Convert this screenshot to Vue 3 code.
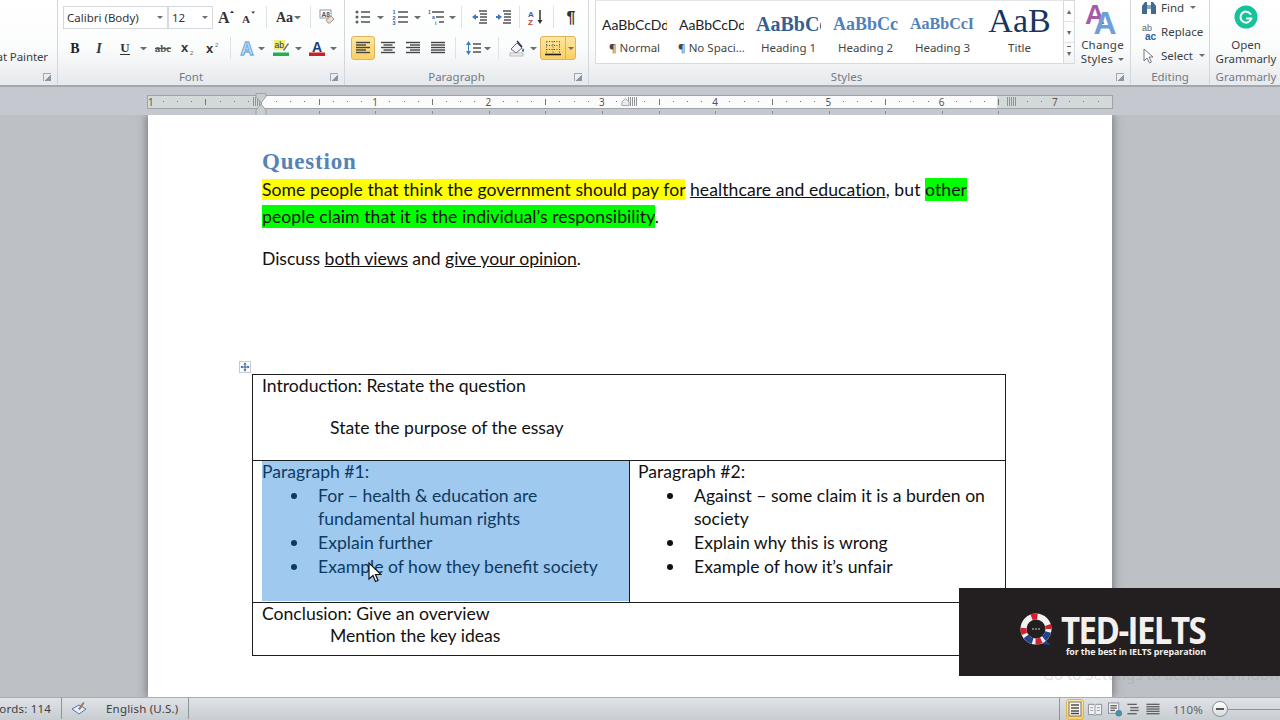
<script setup>
// icon bodies, all drawn in a 16x16 box
const serif = 'font-family="Liberation Serif"'
const sans = 'font-family="Liberation Sans"'
const lines = (rows) => rows.map(([a, b, y]) => `<path d="M${a} ${y}H${b}" stroke="#444" stroke-width="1.4"/>`).join('')
const dots = [3, 8, 13].map((y) => `<circle cx="3" cy="${y}" r="1.5" fill="#55606c"/>`).join('')

const icons = {
  grow: `<text x="0" y="14" ${serif} font-weight="700" font-size="16" fill="#333">A</text><path d="M12 4l2-2.500 2 2.500z" fill="#333"/>`,
  shrink: `<text x="1" y="14" ${serif} font-weight="700" font-size="12" fill="#333">A</text><path d="M11 2l2 2.500 2-2.500z" fill="#333"/>`,
  case: `<text x="0" y="13" ${serif} font-weight="700" font-size="14" fill="#333">Aa</text>`,
  clear: `<rect x="1" y="1" width="11" height="8" fill="#fff" stroke="#8b98a8"/><text x="2.500" y="7.500" ${sans} font-size="6.500" font-weight="700" fill="#456">A8</text><path d="M7 11l5-4 3 3-4 4H9z" fill="#f3d9d6" stroke="#a98"/>`,
  bold: `<text x="8" y="13" text-anchor="middle" ${serif} font-weight="700" font-size="14" fill="#222">B</text>`,
  italic: `<text x="8" y="13" text-anchor="middle" ${serif} font-style="italic" font-weight="700" font-size="14" fill="#333">I</text>`,
  under: `<text x="8" y="11.500" text-anchor="middle" ${serif} font-weight="700" font-size="13" fill="#333">U</text><path d="M3 14.500h10" stroke="#333"/>`,
  strike: `<text x="8" y="12" text-anchor="middle" ${serif} font-weight="700" font-size="11" fill="#555">abc</text><path d="M0 8.500h16" stroke="#555"/>`,
  sub: `<text x="1" y="12" ${sans} font-weight="700" font-size="13" fill="#333">x</text><text x="10" y="15" ${sans} font-size="6" fill="#666">2</text>`,
  sup: `<text x="1" y="13" ${sans} font-weight="700" font-size="13" fill="#333">x</text><text x="10" y="7" ${sans} font-size="6" fill="#666">2</text>`,
  glow: `<text x="8" y="15" text-anchor="middle" ${sans} font-weight="700" font-size="18" fill="#dcebf9" stroke="#79aee2" stroke-width="1.300">A</text>`,
  mark: `<rect x="1" y="0" width="11" height="10" fill="#f0ee7a"/><text x="1.500" y="8" ${sans} font-size="8.500" fill="#333">ab</text><path d="M10 10l5-7 1 1-5 7z" fill="#55708f"/><rect x="0" y="12.500" width="16" height="3.500" fill="#22b14c"/>`,
  color: `<text x="8" y="11.500" text-anchor="middle" ${sans} font-weight="700" font-size="14" fill="#1f3f78">A</text><rect x="0" y="12.500" width="16" height="3.500" fill="#cc2027"/>`,
  bullets: dots + lines([[7, 16, 3], [7, 16, 8], [7, 16, 13]]),
  numbers: `<g ${sans} font-size="5.500" font-weight="700" fill="#33609e"><text x="0.500" y="5">1</text><text x="0.500" y="10.500">2</text><text x="0.500" y="16">3</text></g>` + lines([[6, 16, 3], [6, 16, 8], [6, 16, 13]]),
  multi: `<g ${sans} font-size="5" font-weight="700" fill="#33609e"><text x="0" y="5">1</text><text x="4" y="10">a</text><text x="7" y="16">i</text></g>` + lines([[4, 16, 3], [8, 16, 8], [11, 16, 13]]),
  outdent: `<path d="M1 8l4-3v2h2v2H5v2z" fill="#3d78c0"/>` + lines([[8, 16, 2], [9, 16, 5], [9, 16, 8], [9, 16, 11], [8, 16, 14]]),
  indent: `<path d="M7 8L3 5v2H1v2h2v2z" fill="#3d78c0"/>` + lines([[8, 16, 2], [9, 16, 5], [9, 16, 8], [9, 16, 11], [8, 16, 14]]),
  sort: `<text x="0" y="7.500" ${sans} font-weight="700" font-size="8" fill="#33609e">A</text><text x="0" y="16" ${sans} font-weight="700" font-size="8" fill="#b0493f">Z</text><path d="M12 1v11" stroke="#333" stroke-width="1.500"/><path d="M9.500 11h5L12 15z" fill="#333"/>`,
  pilcrow: `<text x="8" y="14" text-anchor="middle" ${sans} font-weight="700" font-size="16" fill="#333">¶</text>`,
  left: lines([[1, 15, 2.500], [1, 11, 5], [1, 15, 7.500], [1, 11, 10], [1, 15, 12.500]]),
  center: lines([[1, 15, 2.500], [3.500, 12.500, 5], [1, 15, 7.500], [3.500, 12.500, 10], [1, 15, 12.500]]),
  right: lines([[1, 15, 2.500], [5, 15, 5], [1, 15, 7.500], [5, 15, 10], [1, 15, 12.500]]),
  justify: lines([[1, 15, 2.500], [1, 15, 5], [1, 15, 7.500], [1, 15, 10], [1, 15, 12.500]]),
  spacing: `<path d="M3.500 1L6 5H1zM3.500 15L1 11h5z" fill="#3d78c0"/><path d="M3.500 4v8" stroke="#3d78c0"/>` + lines([[8, 16, 4], [8, 16, 8], [8, 16, 12]]),
  shade: `<path d="M2 9l6-6 5 5-6 5z" fill="#f4f6f8" stroke="#667"/><path d="M8 1l5 6" stroke="#334" stroke-width="1.500"/><path d="M14 8c1.500 2 1.500 3.500 0 4-1.500-.5-1.500-2 0-4z" fill="#3d78c0"/><rect x="1" y="13" width="13" height="3" fill="#eee" stroke="#999" stroke-width=".6"/>`,
  borders: `<path d="M1.500 1.500h13M1.500 5.500h13M1.500 9.500h13M1.500 1.500v12M8 1.500v12M14.500 1.500v12" stroke="#555" stroke-dasharray="1 1.500"/><path d="M0 14.500h16" stroke="#222" stroke-width="1.600"/>`,
  print: `<rect x="2" y="1" width="12" height="14" fill="#f8f6ee" stroke="#777"/>` + lines([[4, 12, 4], [4, 12, 7], [4, 12, 10], [4, 12, 12.500]]),
  read: `<path d="M1 2.500h6l1 1 1-1h6v11H9l-1 1-1-1H1z" fill="#f6f7f8" stroke="#778"/><path d="M8 3.500v10M3 6h3M3 9h3M10 6h3M10 9h3" stroke="#889"/>`,
  web: `<rect x="1" y="1" width="11" height="11" fill="#f6f7f8" stroke="#778"/>` + lines([[3, 10, 4], [3, 10, 6.500], [3, 8, 9]]) + `<circle cx="12" cy="12" r="3.500" fill="#2f7d9c"/>`,
  outline: lines([[2, 12, 2.500], [5, 14, 6], [5, 14, 9], [2, 12, 12.500]]),
  draft: lines([[1, 15, 2.500], [1, 15, 5], [1, 15, 7.500], [1, 15, 10], [1, 15, 12.500]]),
  proof: `<path d="M1 9l7-4 7 4-7 5z" fill="#e8eef6" stroke="#4b78b8"/><path d="M7 9l5-7 1.500 1L9 10z" fill="#9a7a50"/>`,
}

// lay a toolbar row out left to right: each tool names the x of its centre,
// and its left margin is whatever is left over after the previous tool
const place = (start, items) => {
  let right = start
  return items.map((t) => {
    const w = t.w || 16
    const gap = t.c - w / 2 - right
    right = t.c + w / 2
    return { ...t, w, gap }
  })
}
const D = (c) => ({ c, w: 7, drop: true })
const S = (c) => ({ c, w: 1, sep: true })

const fontTop = place(213, [
  { c: 226, i: 'grow' }, { c: 248, i: 'shrink', w: 15 }, S(266), { c: 284, i: 'case' }, D(297), S(310), { c: 327, i: 'clear' },
])
const fontBottom = place(63, [
  { c: 75, i: 'bold' }, { c: 99, i: 'italic' }, { c: 125, i: 'under' }, D(143), { c: 163, i: 'strike', w: 18 }, { c: 188, i: 'sub' }, { c: 213, i: 'sup' },
  S(230), { c: 247, i: 'glow' }, D(261), { c: 281, i: 'mark' }, D(298), { c: 317, i: 'color' }, D(333),
])
const paraTop = place(345, [
  { c: 362, i: 'bullets' }, D(380), { c: 400, i: 'numbers' }, D(417), { c: 436, i: 'multi' }, D(452), S(461),
  { c: 479, i: 'outdent' }, { c: 503, i: 'indent' }, S(519), { c: 536, i: 'sort' }, S(553), { c: 571, i: 'pilcrow' },
])
const paraBottom = place(345, [
  { c: 362.5, i: 'left', w: 24, active: true }, { c: 388, i: 'center' }, { c: 413, i: 'right' }, { c: 438, i: 'justify' }, S(455),
  { c: 473, i: 'spacing' }, D(487), S(498), { c: 517, i: 'shade' }, D(533),
])
const statusRight = place(1060, [
  { c: 1074.5, i: 'print', w: 18, active: true }, { c: 1095, i: 'read' }, { c: 1115, i: 'web' }, { c: 1133, i: 'outline' }, { c: 1153, i: 'draft' },
])

const gallery = [
  { cls: 'p-normal', preview: 'AaBbCcDd', label: '¶ Normal' },
  { cls: 'p-normal', preview: 'AaBbCcDd', label: '¶ No Spaci...' },
  { cls: 'p-h1', preview: 'AaBbCc', label: 'Heading 1' },
  { cls: 'p-h2', preview: 'AaBbCc', label: 'Heading 2' },
  { cls: 'p-h3', preview: 'AaBbCcI', label: 'Heading 3' },
  { cls: 'p-title', preview: 'AaB', label: 'Title' },
]

// ruler: origin is the left page margin, one inch is 113.3px
const inch = 113.3
const origin = 114
const ticks = []
for (let n = -9; n <= 60; n++) {
  const x = origin + (n * inch) / 8
  if (x < 6 || x > 960 || n % 8 === 0) continue
  ticks.push({ x, major: n % 4 === 0 })
}
const numbers = [1, 2, 3, 4, 5, 6, 7].map((n) => ({ n, x: origin + n * inch }))
const lowerTicks = []
for (let n = 1; n <= 13; n++) lowerTicks.push(origin + (n * inch) / 2)
const hatches = [105, 480, 859]
</script>

<template>
  <div class="word">
    <header class="ribbon">
      <section class="group clip">
        <div class="painter">at Painter</div>
        <footer class="group-foot"><i class="launcher"></i></footer>
      </section>

      <section class="group font">
        <div class="rows">
          <div class="row">
            <div class="select sel-font">Calibri (Body)<b class="caret"></b></div>
            <div class="select sel-size">12<b class="caret"></b></div>
            <template v-for="t in fontTop" :key="t.c">
              <i v-if="t.sep" class="sep" :style="{ marginLeft: t.gap + 'px' }"></i>
              <b v-else-if="t.drop" class="caret tool-caret" :style="{ marginLeft: t.gap + 'px', width: t.w + 'px' }"></b>
              <svg v-else class="ico" viewBox="0 0 16 16" :style="{ marginLeft: t.gap + 'px', width: t.w + 'px' }" v-html="icons[t.i]"></svg>
            </template>
          </div>
          <div class="row">
            <template v-for="t in fontBottom" :key="t.c">
              <i v-if="t.sep" class="sep" :style="{ marginLeft: t.gap + 'px' }"></i>
              <b v-else-if="t.drop" class="caret tool-caret" :style="{ marginLeft: t.gap + 'px', width: t.w + 'px' }"></b>
              <svg v-else class="ico" viewBox="0 0 16 16" :style="{ marginLeft: t.gap + 'px', width: t.w + 'px' }" v-html="icons[t.i]"></svg>
            </template>
          </div>
        </div>
        <footer class="group-foot off-launcher">Font<i class="launcher"></i></footer>
      </section>

      <section class="group para">
        <div class="rows">
          <div class="row">
            <template v-for="t in paraTop" :key="t.c">
              <i v-if="t.sep" class="sep" :style="{ marginLeft: t.gap + 'px' }"></i>
              <b v-else-if="t.drop" class="caret tool-caret" :style="{ marginLeft: t.gap + 'px', width: t.w + 'px' }"></b>
              <svg v-else class="ico" viewBox="0 0 16 16" :style="{ marginLeft: t.gap + 'px', width: t.w + 'px' }" v-html="icons[t.i]"></svg>
            </template>
          </div>
          <div class="row">
            <template v-for="t in paraBottom" :key="t.c">
              <i v-if="t.sep" class="sep" :style="{ marginLeft: t.gap + 'px' }"></i>
              <b v-else-if="t.drop" class="caret tool-caret" :style="{ marginLeft: t.gap + 'px', width: t.w + 'px' }"></b>
              <span v-else-if="t.active" class="active" :style="{ marginLeft: t.gap + 'px', width: t.w + 'px' }">
                <svg class="ico" viewBox="0 0 16 16" v-html="icons[t.i]"></svg>
              </span>
              <svg v-else class="ico" viewBox="0 0 16 16" :style="{ marginLeft: t.gap + 'px', width: t.w + 'px' }" v-html="icons[t.i]"></svg>
            </template>
            <span class="active split">
              <span class="split-main"><svg class="ico" viewBox="0 0 16 16" v-html="icons.borders"></svg></span>
              <b class="caret"></b>
            </span>
          </div>
        </div>
        <footer class="group-foot off-launcher">Paragraph<i class="launcher"></i></footer>
      </section>

      <section class="group styles">
        <div class="styles-top">
          <div class="gallery">
            <div v-for="(g, n) in gallery" :key="n" class="style-item">
              <div class="preview" :class="g.cls">{{ g.preview }}</div>
              <div class="style-label">{{ g.label }}</div>
            </div>
          </div>
          <div class="scroller">
            <span>▴</span><span>▾</span><span class="more">▾</span>
          </div>
          <div class="change">
            <svg class="change-ico" viewBox="0 0 32 32">
              <text x="-1" y="22" font-family="Liberation Sans" font-weight="700" font-size="26" fill="#a55aa8">A</text>
              <text x="7" y="31" font-family="Liberation Sans" font-weight="700" font-size="30" fill="#6f9fd8">A</text>
            </svg>
            <div class="change-text">Change<br />Styles <b class="caret inline-caret"></b></div>
          </div>
        </div>
        <footer class="group-foot off-wide">Styles<i class="launcher"></i></footer>
      </section>

      <section class="group editing">
        <div class="edit-list">
          <div class="edit-row">
            <svg class="edit-ico" viewBox="0 0 16 16">
              <path d="M1 14V6l3-4h2v12zM15 14V6l-3-4h-2v12z" fill="#45688f" />
              <rect x="6" y="5" width="4" height="4" fill="#8aa7c6" />
            </svg>
            Find <b class="caret inline-caret"></b>
          </div>
          <div class="edit-row">
            <svg class="edit-ico" viewBox="0 0 16 16">
              <text x="1" y="7" font-family="Liberation Sans" font-size="9" fill="#666">ab</text>
              <text x="4" y="15.500" font-family="Liberation Sans" font-weight="700" font-size="10" fill="#2d5f9e">ac</text>
            </svg>
            Replace
          </div>
          <div class="edit-row">
            <svg class="edit-ico" viewBox="0 0 16 16">
              <path d="M3 1v12l3-3 2.500 5 2-1L8 9h4z" fill="#fff" stroke="#778" />
            </svg>
            Select <b class="caret inline-caret"></b>
          </div>
        </div>
        <footer class="group-foot">Editing</footer>
      </section>

      <section class="group grammarly">
        <svg class="g-logo" viewBox="0 0 24 24">
          <circle cx="12" cy="12" r="11.500" fill="#15c39a" />
          <path d="M16.500 9a5.500 5.500 0 1 0 .8 4.500H13" fill="none" stroke="#fff" stroke-width="2" stroke-linecap="round" />
        </svg>
        <div class="g-text">Open<br />Grammarly</div>
        <footer class="group-foot">Grammarly</footer>
      </section>
    </header>

    <div class="ruler-band">
      <div class="ruler">
        <span class="ruler-num" :style="{ left: '0px' }">1</span>
        <div class="ruler-white"></div>
        <i v-for="t in ticks" :key="t.x" class="tick" :class="{ major: t.major }" :style="{ left: t.x + 'px' }"></i>
        <span v-for="m in numbers" :key="m.n" class="ruler-num" :style="{ left: m.x - 3 + 'px' }">{{ m.n }}</span>
        <i v-for="x in lowerTicks" :key="x" class="low-tick" :style="{ left: x + 'px' }"></i>
        <i v-for="x in hatches" :key="x" class="hatch" :style="{ left: x + 'px' }"></i>
        <svg class="indent-mark" viewBox="0 0 12 24">
          <path d="M1 .5h10v3L6 10 1 3.500zM6 11l5 6v6.500H1V17z" fill="#c9cdd0" stroke="#9da3a8" />
        </svg>
        <svg class="hang-mark" viewBox="0 0 10 10">
          <path d="M5 1l4 4v4H1V5z" fill="#e8eaec" stroke="#9da3a8" />
        </svg>
      </div>
    </div>

    <main class="workspace">
      <article class="page">
        <h1 class="doc-title">Question</h1>
        <p class="doc-line lead">
          <span class="hl-y">Some people that think the government should pay for</span> <u>healthcare and education</u>, but <span class="hl-g">other people claim that it is the individual’s responsibility</span>.
        </p>
        <p class="doc-line discuss">Discuss <u>both views</u> and <u>give your opinion</u>.</p>

        <div class="outline-table">
          <svg class="move-handle" viewBox="0 0 12 12">
            <rect x=".5" y=".5" width="11" height="11" fill="#fff" stroke="#c4ccd4" />
            <path d="M6 2v8M2 6h8" stroke="#2f5f9e" />
            <path d="M6 1.500l1.500 2h-3zM6 10.500l1.500-2h-3zM1.500 6l2-1.500v3zM10.500 6l-2-1.500v3z" fill="#2f5f9e" />
          </svg>
          <div class="cell wide intro">
            <div class="first">Introduction: Restate the question</div>
            <div class="sub-line state">State the purpose of the essay</div>
          </div>
          <div class="cell pair left-cell">
            <div class="selected">
              <div class="first">Paragraph #1:</div>
              <ul>
                <li>For – health &amp; education are fundamental human rights</li>
                <li>Explain further</li>
                <li>Example of how they benefit society</li>
              </ul>
            </div>
          </div>
          <div class="cell pair right-cell">
            <div class="first">Paragraph #2:</div>
            <ul>
              <li>Against – some claim it is a burden on society</li>
              <li>Explain why this is wrong</li>
              <li>Example of how it’s unfair</li>
            </ul>
          </div>
          <div class="cell wide outro">
            <div class="first">Conclusion: Give an overview</div>
            <div class="sub-line">Mention the key ideas</div>
          </div>
        </div>
      </article>
      <span class="activate">Go to Settings to activate Windows.</span>
    </main>

    <footer class="status">
      <span class="st-words">Words: 114</span>
      <i class="st-sep"></i>
      <svg class="ico st-proof" viewBox="0 0 16 16" v-html="icons.proof"></svg>
      <span class="st-lang">English (U.S.)</span>
      <i class="st-sep"></i>
      <div class="st-right">
        <i class="st-sep"></i>
        <template v-for="t in statusRight" :key="t.c">
          <span v-if="t.active" class="active st-active" :style="{ marginLeft: t.gap + 'px', width: t.w + 'px' }">
            <svg class="ico" viewBox="0 0 16 16" v-html="icons[t.i]"></svg>
          </span>
          <svg v-else class="ico st-ico" viewBox="0 0 16 16" :style="{ marginLeft: t.gap + 'px', width: t.w + 'px' }" v-html="icons[t.i]"></svg>
        </template>
        <span class="st-zoom">110%</span>
        <span class="zoom-minus"></span>
        <span class="zoom-track"></span>
      </div>
    </footer>

    <aside class="brand">
      <svg class="brand-mark" viewBox="0 0 34 34">
        <path d="M26 27l6 5-10-1z" fill="#27408b" />
        <circle cx="17" cy="16" r="12.500" fill="none" stroke="#f2f2f2" stroke-width="6" />
        <circle cx="17" cy="16" r="12.500" fill="none" stroke="#27408b" stroke-width="6" stroke-dasharray="8 70" stroke-dashoffset="-3" />
        <circle cx="17" cy="16" r="12.500" fill="none" stroke="#27408b" stroke-width="6" stroke-dasharray="8 70" stroke-dashoffset="-23" />
        <circle cx="17" cy="16" r="12.500" fill="none" stroke="#d3202e" stroke-width="6" stroke-dasharray="6 14" stroke-dashoffset="-14" />
        <path d="M13.500 16h1M16.500 16h1M19.500 16h1" stroke="#fff" stroke-width="1.400" />
      </svg>
      <div class="brand-text">
        <div class="brand-name">TED-IELTS</div>
        <div class="brand-sub">for the best in IELTS preparation</div>
      </div>
    </aside>

    <svg class="cursor" viewBox="0 0 14 22">
      <path d="M1 1v16l4-3.500 2.500 6 2.500-1-2.500-6H13z" fill="#fff" stroke="#111" stroke-width="1.200" />
    </svg>
  </div>
</template>

<style>
html,
body {
  margin: 0;
  overflow: hidden;
}
</style>

<style scoped>
.word {
  position: relative;
  width: 1280px;
  height: 720px;
  overflow: hidden;
  display: flex;
  flex-direction: column;
  background: #bdc1c6;
  font-family: "Noto Sans", "Liberation Sans", sans-serif;
  color: #3c4043;
}

/* ribbon */
.ribbon {
  height: 85px;
  flex: none;
  display: flex;
  background: linear-gradient(#fff 0%, #fbfcfc 55%, #e6e9ed 100%);
  border-bottom: 2px solid #a4a9ae;
}
.group {
  position: relative;
  flex: none;
  box-sizing: border-box;
  border-right: 1px solid #d3d7db;
}
.clip { width: 58px; }
.font { width: 287px; }
.para { width: 244px; }
.styles { width: 542px; }
.editing { width: 79px; }
.grammarly { flex: 1; border-right: 0; display: flex; flex-direction: column; align-items: center; padding-left: 2px; }
.group-foot {
  position: absolute;
  left: 0;
  right: 0;
  bottom: -1px;
  height: 18px;
  line-height: 17px;
  text-align: center;
  font-size: 11.500px;
  color: #727a84;
}
.off-launcher { padding-right: 20px; }
.off-wide { padding-right: 26px; }
.grammarly .group-foot { padding-left: 2px; }
.launcher {
  position: absolute;
  right: 6px;
  bottom: 5px;
  width: 7px;
  height: 7px;
  border-top: 1px solid #a0a7ae;
  border-left: 1px solid #a0a7ae;
  background: linear-gradient(135deg, transparent 55%, #8b96a3 55%);
}
.painter {
  display: flex;
  justify-content: flex-end;
  padding: 49px 9px 0 0;
  font-size: 11.500px;
  line-height: 15px;
  white-space: nowrap;
  letter-spacing: -0.1px;
}
.rows { display: flex; flex-direction: column; }
.row {
  display: flex;
  align-items: center;
  height: 24px;
}
.rows .row:first-child { margin-top: 5px; }
.rows .row:last-child { margin-top: 7px; }
.font .rows { padding-left: 5px; }
.ico {
  flex: none;
  width: 16px;
  height: 16px;
  overflow: visible;
}
.sep {
  flex: none;
  width: 1px;
  height: 22px;
  background: #dfe2e5;
}
.caret {
  display: inline-block;
  flex: none;
  width: 0;
  height: 0;
  border: 3px solid transparent;
  border-top: 3px solid #6a6f75;
  border-bottom: 0;
}
.tool-caret {
  box-sizing: border-box;
  border-left-width: 3.5px;
  border-right-width: 3.5px;
}
.inline-caret { vertical-align: middle; margin-left: 2px; }
.select {
  box-sizing: border-box;
  flex: none;
  height: 23px;
  display: flex;
  align-items: center;
  justify-content: space-between;
  padding: 0 4px 0 3px;
  background: #fff;
  border: 1px solid #d6dade;
  font-size: 11.500px;
  color: #333;
}
.sel-font { width: 105px; }
.sel-size { width: 45px; padding-right: 4px; }
.active {
  box-sizing: border-box;
  flex: none;
  height: 24px;
  display: inline-flex;
  align-items: center;
  justify-content: center;
  background: linear-gradient(#fde79f, #fbcf63);
  border: 1px solid #dfb35a;
  border-radius: 3px;
}
.split {
  width: 36px;
  margin-left: 3px;
  justify-content: flex-start;
}
.split-main {
  display: flex;
  justify-content: center;
  width: 24px;
  border-right: 1px solid #dfb35a;
  height: 22px;
  align-items: center;
  margin-right: 2px;
}

/* styles gallery */
.styles-top {
  display: flex;
  padding-left: 6px;
}
.gallery {
  box-sizing: border-box;
  width: 469px;
  height: 64px;
  display: flex;
  background: #fff;
  border: 1px solid #d8dbde;
  border-top-color: #e4e6e8;
}
.style-item {
  flex: none;
  width: 77px;
  text-align: center;
  overflow: hidden;
}
.preview {
  height: 36px;
  line-height: 46px;
  white-space: nowrap;
  overflow: hidden;
  text-align: left;
  margin: 0 6px 0 6px;
}
.p-normal { font-family: "Lato", sans-serif; font-size: 14px; color: #222; line-height: 48px; }
.p-h1 { font-family: "Liberation Serif", serif; font-weight: 700; font-size: 20px; color: #365f91; }
.p-h2 { font-family: "Liberation Serif", serif; font-weight: 700; font-size: 18px; color: #4f81bd; }
.p-h3 { font-family: "Liberation Serif", serif; font-weight: 700; font-size: 16px; color: #4f81bd; }
.p-title { font-family: "Liberation Serif", serif; font-size: 34px; color: #17365d; line-height: 40px; text-align: center; margin: 0; }
.style-label {
  margin-top: 3px;
  font-size: 11.500px;
  line-height: 16px;
  white-space: nowrap;
  color: #444;
}
.scroller {
  box-sizing: border-box;
  flex: none;
  width: 11px;
  height: 64px;
  display: flex;
  flex-direction: column;
  border: 1px solid #d8dbde;
  border-left: 0;
  font-size: 8px;
  text-align: center;
  color: #666;
}
.scroller span { flex: 1; line-height: 20px; border-bottom: 1px solid #e0e2e5; }
.scroller .more { border-bottom: 0; text-decoration: overline; }
.change {
  flex: 1;
  text-align: center;
  font-size: 11.500px;
  line-height: 14px;
}
.change-ico {
  display: block;
  width: 36px;
  height: 34px;
  margin: 1px auto 3px;
  overflow: visible;
}
.change-text { letter-spacing: 0.2px; }

/* editing */
.edit-list {
  display: flex;
  flex-direction: column;
  gap: 7px;
  padding: 0 0 0 10px;
  margin-top: -1px;
}
.edit-row {
  display: flex;
  align-items: center;
  gap: 4px;
  height: 17px;
  font-size: 11.500px;
  white-space: nowrap;
}
.edit-ico { flex: none; width: 16px; height: 16px; }
.g-logo { width: 24px; height: 24px; margin-top: 5px; }
.g-text {
  margin-top: 9px;
  text-align: center;
  font-size: 11.500px;
  line-height: 14px;
}

/* ruler */
.ruler-band {
  flex: none;
  height: 28px;
  box-sizing: border-box;
  padding: 8px 0 0 147px;
  background: #c5c9cf;
}
.ruler {
  position: relative;
  box-sizing: border-box;
  width: 966px;
  height: 14px;
  background: #d3d9d9;
  border: 1px solid #9ea4a8;
  font-size: 10px;
  line-height: 12px;
  color: #555;
}
.ruler-white {
  position: absolute;
  top: 0;
  bottom: 0;
  left: 113px;
  width: 736px;
  background: #fbfbfb;
}
.tick {
  position: absolute;
  top: 5px;
  width: 1px;
  height: 1px;
  background: #777;
}
.tick.major { top: 3px; height: 6px; }
.low-tick {
  position: absolute;
  top: 15px;
  width: 1px;
  height: 3px;
  background: #8a8f94;
}
.ruler-num { position: absolute; top: 0; }
.hatch {
  position: absolute;
  top: 1px;
  width: 9px;
  height: 9px;
  background: repeating-linear-gradient(90deg, #8e9498 0 1px, transparent 1px 2px);
}
.indent-mark {
  position: absolute;
  left: 107px;
  top: -3px;
  width: 12px;
  height: 24px;
}
.hang-mark {
  position: absolute;
  left: 473px;
  top: 1px;
  width: 9px;
  height: 10px;
}

/* document */
.workspace {
  position: relative;
  flex: 1;
  min-height: 0;
  overflow: hidden;
  padding-left: 148px;
  background: #bdc1c6;
}
.page {
  box-sizing: border-box;
  width: 964px;
  height: 582px;
  padding: 33px 0 0 114px;
  background: #fff;
  box-shadow: 0 0 9px 1px rgba(85, 90, 95, 0.75);
  font-family: "Lato", "Open Sans", sans-serif;
  font-size: 17.600px;
  color: #111;
}
.doc-title {
  margin: 0;
  font-family: "Liberation Serif", serif;
  font-size: 23px;
  font-weight: 700;
  line-height: 28px;
  letter-spacing: 0.8px;
  color: #5583b8;
}
.doc-line {
  margin: 0;
  width: 736px;
  line-height: 27px;
}
.lead { letter-spacing: 0.06px; }
.discuss { margin-top: 15px; letter-spacing: -0.05px; }
.hl-y { background: #ffff00; }
.hl-g { background: #00ff00; padding: 1px 0; }
.outline-table {
  position: relative;
  box-sizing: border-box;
  width: 754px;
  height: 282px;
  margin: 102px 0 0 -10px;
  display: grid;
  grid-template-columns: 377px 1fr;
  grid-template-rows: 85px 142px 1fr;
  border: 1px solid #1e1e1e;
}
.move-handle {
  position: absolute;
  left: -14px;
  top: -14px;
  width: 12px;
  height: 12px;
}
.cell {
  box-sizing: border-box;
  padding-left: 9px;
  line-height: 23px;
}
.first { margin-top: -1px; }
.wide { grid-column: 1 / 3; }
.pair { border-top: 1px solid #1e1e1e; line-height: 23.700px; }
.right-cell { padding-left: 8px; }
.left-cell { border-right: 1px solid #1e1e1e; }
.sub-line { padding-left: 68px; }
.state { margin-top: 19px; }
.selected {
  display: flow-root;
  height: 140px;
  background: #9fc9ee;
  color: #0d3a63;
}
ul {
  margin: 0;
  padding: 0 0 0 56px;
  list-style: none;
}
li { position: relative; }
li::before {
  content: "";
  position: absolute;
  left: -27px;
  top: 9px;
  width: 6px;
  height: 6px;
  border-radius: 50%;
  background: currentColor;
}
.outro {
  border-top: 1px solid #1e1e1e;
  padding-top: 1px;
  line-height: 22px;
}
.activate {
  position: absolute;
  left: 1043px;
  top: 549px;
  font-size: 15px;
  white-space: nowrap;
  color: rgba(150, 150, 150, 0.3);
}

/* status bar */
.status {
  flex: none;
  height: 23px;
  box-sizing: border-box;
  display: flex;
  align-items: center;
  padding-bottom: 2px;
  background: linear-gradient(#dfe2e6, #c8cdd2);
  border-top: 1px solid #a9aeb3;
  font-size: 11.500px;
  letter-spacing: 0.2px;
  white-space: nowrap;
  position: relative;
}
.st-words { margin-left: -23px; width: 74px; text-align: right; flex: none; }
.st-sep { flex: none; width: 1px; height: 22px; background: #8f959b; margin-left: 10px; }
.st-proof { margin-left: 9px; }
.st-lang { margin-left: 19px; }
.st-right {
  position: absolute;
  left: 1049px;
  top: 0;
  bottom: 0;
  width: 231px;
  display: flex;
  align-items: center;
  color: #5d6368;
}
.st-active { height: 21px; }
.st-ico { height: 15px; opacity: 0.8; }
.st-zoom { margin-left: 12px; }
.zoom-minus {
  position: relative;
  flex: none;
  box-sizing: border-box;
  width: 16px;
  height: 16px;
  margin-left: 9px;
  border: 1px solid #8b9096;
  border-radius: 50%;
  background: linear-gradient(#fff, #d7dadd);
}
.zoom-minus::after {
  content: "";
  position: absolute;
  left: 3px;
  right: 3px;
  top: 6px;
  height: 2px;
  background: #555;
}
.zoom-track {
  flex: 1;
  height: 1px;
  background: #8e9398;
}

/* video overlays */
.brand {
  position: absolute;
  left: 959px;
  top: 588px;
  width: 321px;
  height: 88px;
  box-sizing: border-box;
  padding: 24px 0 0 60px;
  display: flex;
  background: #231f20;
}
.brand-mark {
  flex: none;
  width: 34px;
  height: 34px;
  margin-top: 1px;
}
.brand-text {
  margin-left: 8px;
  color: #f3f0ee;
}
.brand-name {
  font-family: "Open Sans", sans-serif;
  font-size: 38px;
  font-weight: 700;
  line-height: 34px;
  letter-spacing: -1.800px;
  transform: scaleX(0.87);
  transform-origin: left center;
}
.brand-sub {
  margin-left: 5px;
  font-family: "Open Sans", sans-serif;
  font-size: 8.900px;
  font-weight: 700;
  line-height: 11px;
  letter-spacing: -0.1px;
  white-space: nowrap;
}
.cursor {
  position: absolute;
  left: 368px;
  top: 562px;
  width: 14px;
  height: 22px;
}
</style>
